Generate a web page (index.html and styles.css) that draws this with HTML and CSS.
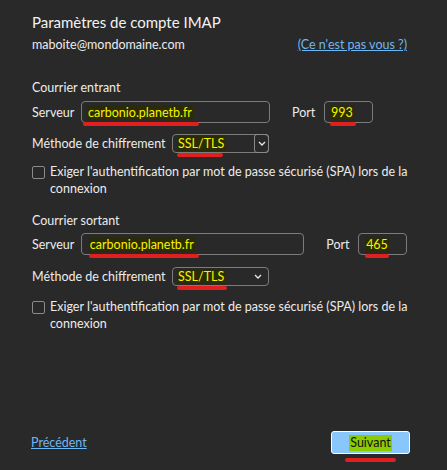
FILE: index.html
```html
<!DOCTYPE html>
<html lang="fr">
<head>
<meta charset="utf-8">
<link rel="stylesheet" href="styles.css">
</head>
<body>
<div class="page">
  <h1 class="title">Paramètres de compte IMAP</h1>
  <div class="account">
    <span>maboite@mondomaine.com</span>
    <a class="link" href="#">(Ce n'est pas vous ?)</a>
  </div>

  <div class="section s1">
    <div class="heading">Courrier entrant</div>
    <div class="row server-row">
      <span class="label lab-server">Serveur</span>
      <div class="input in-server1"><span class="hl mark m-server1">carbonio.planetb.fr</span></div>
      <span class="label lab-port1">Port</span>
      <div class="input in-port1"><span class="hl mark m-port1">993</span></div>
    </div>
    <div class="row method-row">
      <span class="label lab-method">Méthode de chiffrement</span>
      <div class="select sel1">
        <span class="hl mark m-ssl1">SSL/TLS</span>
        <span class="dd boxed"><svg width="8" height="5" viewBox="0 0 8 5"><path d="M1 1 L4 4 L7 1" fill="none" stroke="#e8e8e8" stroke-width="1.3"/></svg></span>
      </div>
    </div>
    <div class="check">
      <span class="box"></span>
      <span class="ctext">Exiger l'authentification par mot de passe sécurisé (SPA) lors de la connexion</span>
    </div>
  </div>

  <div class="section s2">
    <div class="heading">Courrier sortant</div>
    <div class="row server-row">
      <span class="label lab-server">Serveur</span>
      <div class="input in-server2"><span class="hl mark m-server2">carbonio.planetb.fr</span></div>
      <span class="label lab-port2">Port</span>
      <div class="input in-port2"><span class="hl mark m-port2">465</span></div>
    </div>
    <div class="row method-row">
      <span class="label lab-method">Méthode de chiffrement</span>
      <div class="select sel2">
        <span class="hl mark m-ssl2">SSL/TLS</span>
        <span class="dd"><svg width="8" height="5" viewBox="0 0 8 5"><path d="M1 1 L4 4 L7 1" fill="none" stroke="#e8e8e8" stroke-width="1.3"/></svg></span>
      </div>
    </div>
    <div class="check">
      <span class="box"></span>
      <span class="ctext">Exiger l'authentification par mot de passe sécurisé (SPA) lors de la connexion</span>
    </div>
  </div>

  <div class="footer">
    <a class="link" href="#">Précédent</a>
    <button class="next"><span class="green mark m-next">Suivant</span></button>
  </div>
</div>
</body>
</html>
```
FILE: styles.css
```css
html, body {
  margin: 0;
  padding: 0;
  background: #292929;
}
body {
  font-family: "Lato", "Noto Sans", sans-serif;
  color: #ececec;
  font-size: 12.5px;
}
.page {
  box-sizing: border-box;
  width: 447px;
  height: 470px;
  padding: 11px 40px 16px 32px;
  display: flex;
  flex-direction: column;
}
.title {
  margin: 0;
  font-size: 15px;
  font-weight: 400;
  line-height: 22px;
  color: #f2f2f2;
}
.account {
  margin-top: 3px;
  display: flex;
  justify-content: space-between;
  line-height: 18px;
}
.link {
  color: #6fb7f2;
  text-decoration: underline;
}
.section.s1 { margin-top: 25px; }
.section.s2 { margin-top: 15px; }
.heading {
  line-height: 18px;
}
.s1 .heading { margin-bottom: 4px; }
.s2 .heading { margin-bottom: 3px; }
.row {
  display: flex;
  align-items: center;
}
.server-row { height: 22px; }
.method-row { height: 19px; margin-top: 11px; }
.s2 .method-row { margin-top: 12px; }
.label { display: inline-block; white-space: nowrap; }
.lab-server { width: 49px; }
.lab-port1 { margin-left: 22px; width: 32px; }
.lab-port2 { margin-left: 22px; width: 32px; }
.lab-method { width: 140px; }
.input, .select {
  box-sizing: border-box;
  border: 1px solid #7c7c7c;
  border-radius: 4px;
  height: 100%;
  display: flex;
  align-items: center;
  padding-left: 5px;
  position: relative;
}
.in-server1 { width: 189px; }
.in-server2 { width: 224px; padding-left: 7px; }
.in-port1 { width: 49px; }
.in-port2 { width: 49px; padding-left: 6px; }
.select { width: 97px; padding-left: 4px; justify-content: space-between; padding-right: 0; }
.hl {
  background: #2b2b05;
  color: #f4f400;
  line-height: 15px;
  padding: 0 1px;
}
.dd {
  display: flex;
  align-items: center;
  justify-content: center;
  width: 15px;
  height: 100%;
  box-sizing: border-box;
}
.dd.boxed {
  border: 1px solid #8a8a8a;
  border-radius: 3px;
  height: 19px;
  margin-right: -1px;
}
.sel2 .dd { margin-right: 3px; }
.check {
  display: flex;
  align-items: flex-start;
  margin-top: 10px;
}
.s2 .check { margin-top: 12px; }
.box {
  box-sizing: border-box;
  width: 13px;
  height: 13px;
  border: 1px solid #8a8a8a;
  border-radius: 2px;
  margin-top: 3px;
  flex: none;
}
.ctext {
  margin-left: 5px;
  line-height: 17px;
  width: 368px;
  flex: none;
}
.footer {
  margin-top: auto;
  display: flex;
  justify-content: space-between;
  align-items: center;
  height: 23px;
}
.footer .link { margin-left: -1px; }
.next {
  box-sizing: border-box;
  width: 79px;
  height: 23px;
  margin-right: -3px;
  background: #88c6fc;
  border: 1px solid #ffffff;
  border-radius: 3px;
  font-family: inherit;
  font-size: 12.5px;
  color: #111;
  padding: 0;
  position: relative;
}
.green {
  background: #8ccb00;
  color: #101010;
  padding: 0 1px;
  line-height: 16px;
  display: inline-block;
}
.mark { position: relative; }
.mark::after {
  content: "";
  position: absolute;
  left: 0;
  height: 4px;
  background: #e21f1f;
  border-radius: 2px;
}
.m-server1::after { left: -4px; right: -6px; top: 17px; }
.m-port1::after { left: 0; right: -2px; top: 17px; }
.m-ssl1::after { left: 0; right: 2px; top: 17px; }
.m-server2::after { left: 0; right: -4px; top: 17px; }
.m-port2::after { left: 0; right: 0; top: 17px; }
.m-ssl2::after { left: 0; right: -2px; top: 17px; }
.m-next::after { left: -4px; right: -4px; top: 23px; height: 4px; }
```
